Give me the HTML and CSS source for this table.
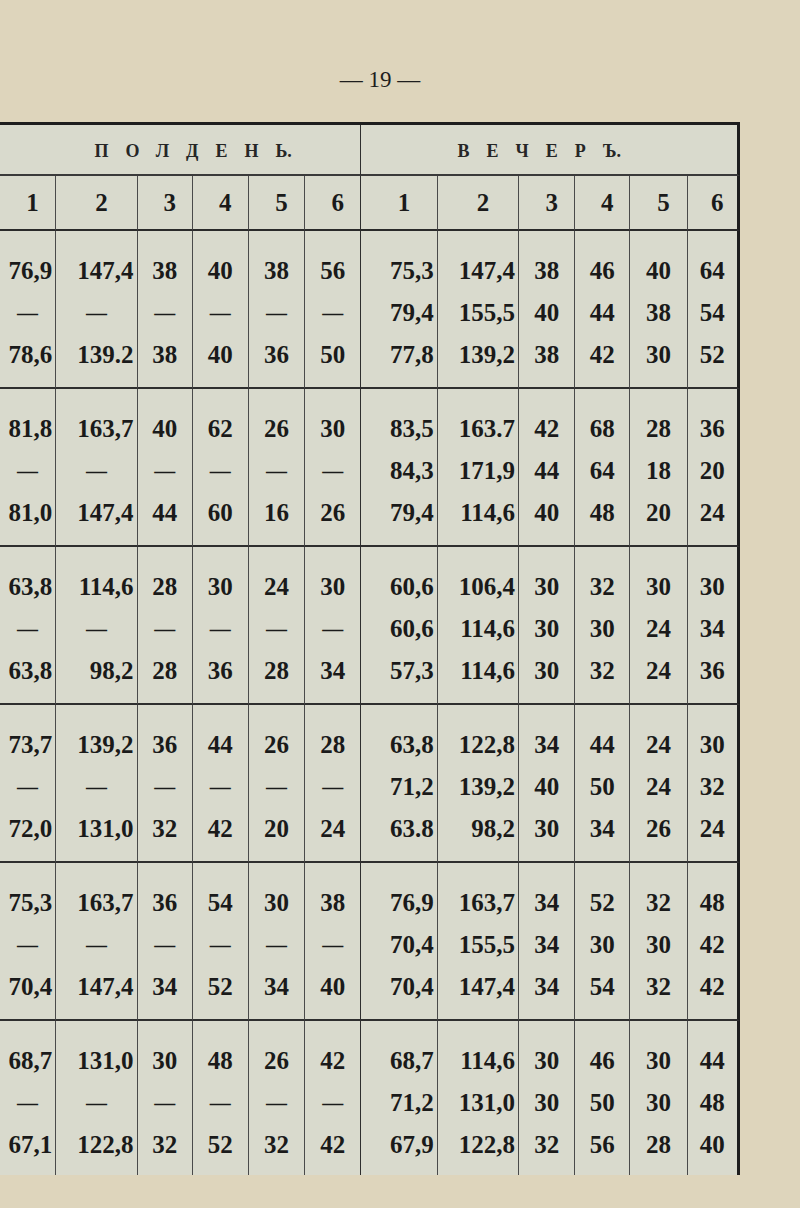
FILE: index.html
```html
<!DOCTYPE html>
<html lang="ru">
<head>
<meta charset="utf-8">
<title>— 19 —</title>
<link rel="stylesheet" href="styles.css">
</head>
<body>
<div class="page">
  <div class="folio">— 19 —</div>
  <table class="sheet">
    <colgroup>
      <col class="w55"><col class="w81"><col class="w55"><col class="w56"><col class="w56"><col class="w56">
      <col class="w76"><col class="w81"><col class="w56"><col class="w55"><col class="w57"><col class="w53">
    </colgroup>
    <thead>
      <tr class="groups">
        <th colspan="6" class="gl"><span class="sp">ПОЛДЕН</span>Ь.</th>
        <th colspan="6" class="gr mid last"><span class="sp">ВЕЧЕР</span>Ъ.</th>
      </tr>
      <tr class="nums">
        <th class="first">1</th><th>2</th><th>3</th><th>4</th><th>5</th><th>6</th>
        <th class="mid">1</th><th>2</th><th>3</th><th>4</th><th>5</th><th class="last">6</th>
      </tr>
    </thead>
    <tbody>
      <tr class="grp">
        <td class="r first"><div>76,9</div><div class="d">—</div><div>78,6</div></td>
        <td class="r"><div>147,4</div><div class="d">—</div><div>139.2</div></td>
        <td><div>38</div><div class="d">—</div><div>38</div></td>
        <td><div>40</div><div class="d">—</div><div>40</div></td>
        <td><div>38</div><div class="d">—</div><div>36</div></td>
        <td><div>56</div><div class="d">—</div><div>50</div></td>
        <td class="r mid"><div>75,3</div><div>79,4</div><div>77,8</div></td>
        <td class="r"><div>147,4</div><div>155,5</div><div>139,2</div></td>
        <td><div>38</div><div>40</div><div>38</div></td>
        <td><div>46</div><div>44</div><div>42</div></td>
        <td><div>40</div><div>38</div><div>30</div></td>
        <td class="last"><div>64</div><div>54</div><div>52</div></td>
      </tr>
      <tr class="grp">
        <td class="r first"><div>81,8</div><div class="d">—</div><div>81,0</div></td>
        <td class="r"><div>163,7</div><div class="d">—</div><div>147,4</div></td>
        <td><div>40</div><div class="d">—</div><div>44</div></td>
        <td><div>62</div><div class="d">—</div><div>60</div></td>
        <td><div>26</div><div class="d">—</div><div>16</div></td>
        <td><div>30</div><div class="d">—</div><div>26</div></td>
        <td class="r mid"><div>83,5</div><div>84,3</div><div>79,4</div></td>
        <td class="r"><div>163.7</div><div>171,9</div><div>114,6</div></td>
        <td><div>42</div><div>44</div><div>40</div></td>
        <td><div>68</div><div>64</div><div>48</div></td>
        <td><div>28</div><div>18</div><div>20</div></td>
        <td class="last"><div>36</div><div>20</div><div>24</div></td>
      </tr>
      <tr class="grp">
        <td class="r first"><div>63,8</div><div class="d">—</div><div>63,8</div></td>
        <td class="r"><div>114,6</div><div class="d">—</div><div>98,2</div></td>
        <td><div>28</div><div class="d">—</div><div>28</div></td>
        <td><div>30</div><div class="d">—</div><div>36</div></td>
        <td><div>24</div><div class="d">—</div><div>28</div></td>
        <td><div>30</div><div class="d">—</div><div>34</div></td>
        <td class="r mid"><div>60,6</div><div>60,6</div><div>57,3</div></td>
        <td class="r"><div>106,4</div><div>114,6</div><div>114,6</div></td>
        <td><div>30</div><div>30</div><div>30</div></td>
        <td><div>32</div><div>30</div><div>32</div></td>
        <td><div>30</div><div>24</div><div>24</div></td>
        <td class="last"><div>30</div><div>34</div><div>36</div></td>
      </tr>
      <tr class="grp">
        <td class="r first"><div>73,7</div><div class="d">—</div><div>72,0</div></td>
        <td class="r"><div>139,2</div><div class="d">—</div><div>131,0</div></td>
        <td><div>36</div><div class="d">—</div><div>32</div></td>
        <td><div>44</div><div class="d">—</div><div>42</div></td>
        <td><div>26</div><div class="d">—</div><div>20</div></td>
        <td><div>28</div><div class="d">—</div><div>24</div></td>
        <td class="r mid"><div>63,8</div><div>71,2</div><div>63.8</div></td>
        <td class="r"><div>122,8</div><div>139,2</div><div>98,2</div></td>
        <td><div>34</div><div>40</div><div>30</div></td>
        <td><div>44</div><div>50</div><div>34</div></td>
        <td><div>24</div><div>24</div><div>26</div></td>
        <td class="last"><div>30</div><div>32</div><div>24</div></td>
      </tr>
      <tr class="grp">
        <td class="r first"><div>75,3</div><div class="d">—</div><div>70,4</div></td>
        <td class="r"><div>163,7</div><div class="d">—</div><div>147,4</div></td>
        <td><div>36</div><div class="d">—</div><div>34</div></td>
        <td><div>54</div><div class="d">—</div><div>52</div></td>
        <td><div>30</div><div class="d">—</div><div>34</div></td>
        <td><div>38</div><div class="d">—</div><div>40</div></td>
        <td class="r mid"><div>76,9</div><div>70,4</div><div>70,4</div></td>
        <td class="r"><div>163,7</div><div>155,5</div><div>147,4</div></td>
        <td><div>34</div><div>34</div><div>34</div></td>
        <td><div>52</div><div>30</div><div>54</div></td>
        <td><div>32</div><div>30</div><div>32</div></td>
        <td class="last"><div>48</div><div>42</div><div>42</div></td>
      </tr>
      <tr class="grp end">
        <td class="r first"><div>68,7</div><div class="d">—</div><div>67,1</div></td>
        <td class="r"><div>131,0</div><div class="d">—</div><div>122,8</div></td>
        <td><div>30</div><div class="d">—</div><div>32</div></td>
        <td><div>48</div><div class="d">—</div><div>52</div></td>
        <td><div>26</div><div class="d">—</div><div>32</div></td>
        <td><div>42</div><div class="d">—</div><div>42</div></td>
        <td class="r mid"><div>68,7</div><div>71,2</div><div>67,9</div></td>
        <td class="r"><div>114,6</div><div>131,0</div><div>122,8</div></td>
        <td><div>30</div><div>30</div><div>32</div></td>
        <td><div>46</div><div>50</div><div>56</div></td>
        <td><div>30</div><div>30</div><div>28</div></td>
        <td class="last"><div>44</div><div>48</div><div>40</div></td>
      </tr>
    </tbody>
  </table>
</div>
</body>
</html>
```

FILE: styles.css
```css
html, body {
  margin: 0;
  padding: 0;
}

body {
  width: 800px;
  height: 1208px;
  overflow: hidden;
  background: #ded5bc;
  font-family: "Liberation Serif", "Times New Roman", serif;
  color: #161616;
}

.page {
  padding-top: 66px;
}

.folio {
  width: 760px;
  height: 56px;
  line-height: 28px;
  text-align: center;
  font-size: 23px;
  color: #1e1e1e;
}

.sheet {
  border-collapse: separate;
  border-spacing: 0;
  table-layout: fixed;
  width: 740px;
  background: #d9dacd;
  border-top: 3px solid #1e1e1e;
}

.w53 { width: 53px; }
.w55 { width: 55px; }
.w56 { width: 56px; }
.w57 { width: 57px; }
.w76 { width: 76px; }
.w81 { width: 81px; }

.sheet th,
.sheet td {
  padding: 0;
  border-left: 1px solid #4a4a4a;
  text-align: center;
  vertical-align: top;
}

.sheet th.first,
.sheet td.first,
.sheet th.gl {
  border-left: none;
}

.sheet .mid {
  border-left: 1.5px solid #2e2e2e;
}

.sheet .last {
  border-right: 3px solid #1e1e1e;
}

/* group header row */
.groups th {
  padding-top: 4px;
  padding-bottom: 1px;
  line-height: 44px;
  font-size: 18px;
  font-weight: bold;
  color: #262626;
  border-bottom: 2px solid #3a3a3a;
}

.groups .gl {
  padding-left: 26px;
}

.groups .gr {
  padding-right: 20px;
}

.sp {
  letter-spacing: 17px;
}

/* column number row */
.nums th {
  line-height: 53px;
  font-size: 25px;
  font-weight: bold;
  color: #1a1a1a;
  padding-left: 10px;
  border-bottom: 2px solid #2a2a2a;
}

/* data groups */
.grp td {
  padding-top: 19px;
  padding-bottom: 11px;
  font-size: 25px;
  font-weight: bold;
  line-height: 42px;
  color: #1a1a1a;
  border-bottom: 2px solid #2e2e2e;
}

.grp.end td {
  padding-bottom: 9px;
  border-bottom: none;
}

.grp td.r {
  text-align: right;
  padding-right: 3px;
}

.grp td .d {
  text-align: center;
  font-size: 21px;
}

.grp td.r .d {
  padding-left: 3px;
}

.grp td div {
  white-space: nowrap;
}
```
